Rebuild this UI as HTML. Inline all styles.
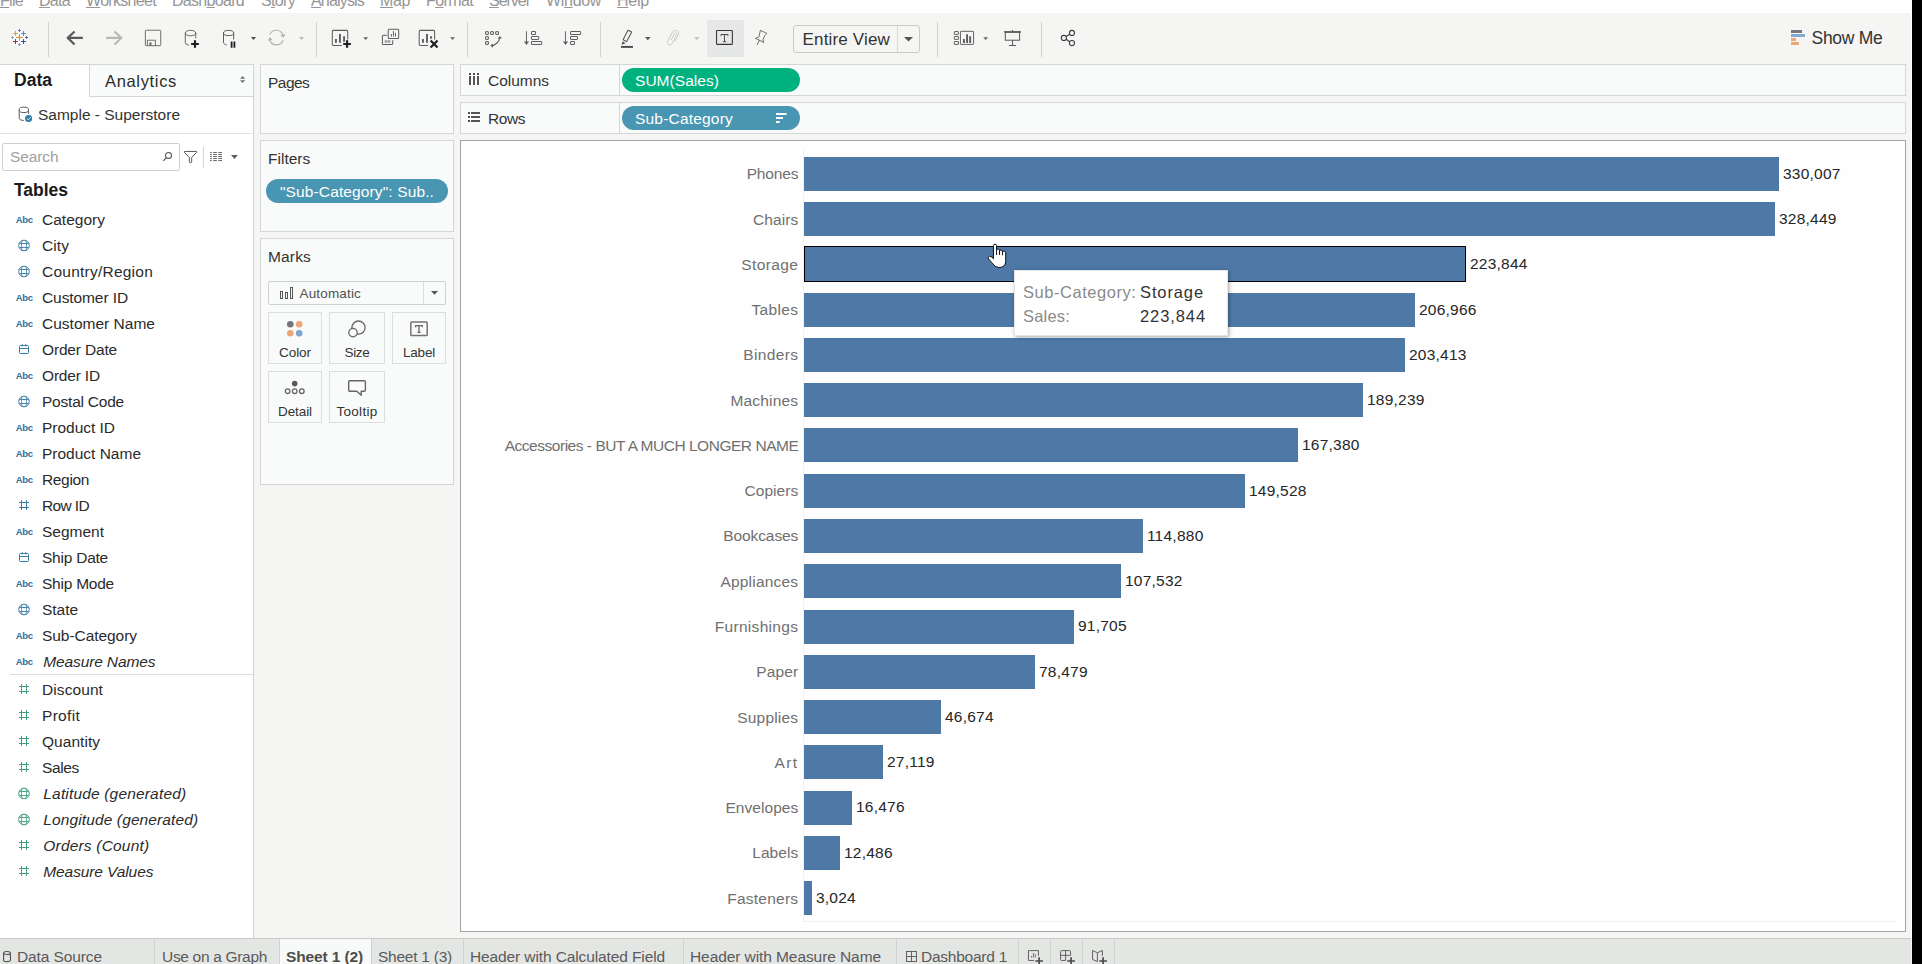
<!DOCTYPE html>
<html><head><meta charset="utf-8"><title>Tableau</title>
<style>
html,body{margin:0;padding:0;}
body{width:1922px;height:964px;position:relative;overflow:hidden;background:#fff;font-family:"Liberation Sans",sans-serif;}
.a{position:absolute;}
.t{white-space:pre;}
svg{overflow:visible;}
</style></head><body>
<div class="a" style="left:0px;top:13px;width:1911px;height:925px;background:#f5f5f3;"></div>
<div class="a" style="left:1912px;top:0px;width:10px;height:964px;background:#000;"></div>
<div class="a" style="left:0;top:0;width:1911px;height:13px;overflow:hidden;background:#fff;">
<span class="a t" style="left:0.00px;top:-7.00px;font-size:16px;line-height:16px;color:#969696;letter-spacing:-0.695px;"><u>F</u>ile</span>
<span class="a t" style="left:39.00px;top:-7.00px;font-size:16px;line-height:16px;color:#969696;letter-spacing:-0.699px;"><u>D</u>ata</span>
<span class="a t" style="left:86.00px;top:-7.00px;font-size:16px;line-height:16px;color:#969696;letter-spacing:-0.687px;"><u>W</u>orksheet</span>
<span class="a t" style="left:172.00px;top:-7.00px;font-size:16px;line-height:16px;color:#969696;letter-spacing:-0.697px;">Dash<u>b</u>oard</span>
<span class="a t" style="left:261.00px;top:-7.00px;font-size:16px;line-height:16px;color:#969696;letter-spacing:-0.669px;">S<u>t</u>ory</span>
<span class="a t" style="left:311.00px;top:-7.00px;font-size:16px;line-height:16px;color:#969696;letter-spacing:-0.822px;"><u>A</u>nalysis</span>
<span class="a t" style="left:380.00px;top:-7.00px;font-size:16px;line-height:16px;color:#969696;letter-spacing:-0.375px;"><u>M</u>ap</span>
<span class="a t" style="left:426.00px;top:-7.00px;font-size:16px;line-height:16px;color:#969696;letter-spacing:-0.612px;">F<u>o</u>rmat</span>
<span class="a t" style="left:489.00px;top:-7.00px;font-size:16px;line-height:16px;color:#969696;letter-spacing:-1.021px;"><u>S</u>erver</span>
<span class="a t" style="left:546.00px;top:-7.00px;font-size:16px;line-height:16px;color:#969696;letter-spacing:-0.318px;">Wi<u>n</u>dow</span>
<span class="a t" style="left:617.00px;top:-7.00px;font-size:16px;line-height:16px;color:#969696;letter-spacing:-0.227px;"><u>H</u>elp</span>
</div>
<div class="a" style="left:48px;top:22px;width:1px;height:35px;background:#d2d2d0;"></div>
<div class="a" style="left:316px;top:22px;width:1px;height:35px;background:#d2d2d0;"></div>
<div class="a" style="left:467px;top:22px;width:1px;height:35px;background:#d2d2d0;"></div>
<div class="a" style="left:600px;top:22px;width:1px;height:35px;background:#d2d2d0;"></div>
<div class="a" style="left:937px;top:22px;width:1px;height:35px;background:#d2d2d0;"></div>
<div class="a" style="left:1041px;top:22px;width:1px;height:35px;background:#d2d2d0;"></div>
<svg class="a" style="left:4px;top:22px;" width="50" height="32" viewBox="0 0 1506 964"><path d="M465 185L745 465L465 745L185 465Z" fill="#fbfbfa"/><path d="M362 465H568M465 362V568" stroke="#de8a2a" stroke-width="30" fill="none"/><path d="M271 345H419M345 271V419" stroke="#e2932a" stroke-width="28" fill="none"/><path d="M514 345H660M587 272V418" stroke="#4f7db3" stroke-width="28" fill="none"/><path d="M271 588H419M345 514V662" stroke="#8c2040" stroke-width="28" fill="none"/><path d="M514 588H660M587 515V661" stroke="#24408e" stroke-width="28" fill="none"/><path d="M421 255H509M465 211V299" stroke="#6c76b4" stroke-width="30" fill="none"/><path d="M211 465H299M255 421V509" stroke="#8ba0b8" stroke-width="30" fill="none"/><path d="M636 465H724M680 421V509" stroke="#525fa0" stroke-width="30" fill="none"/><path d="M421 680H509M465 636V724" stroke="#7f93c8" stroke-width="30" fill="none"/></svg>
<svg class="a" style="left:60px;top:22px;" width="140" height="32" viewBox="0 0 1922 439.3"><path d="M314 218H108M200 130L106 218L200 308" fill="none" stroke="#5a5a5a" stroke-width="30" stroke-linejoin="round"/><path d="M633 218H842M748 130L844 218L748 308" fill="none" stroke="#b7b7b5" stroke-width="28" stroke-linejoin="round"/><rect x="1172" y="113" width="211" height="212" rx="12" fill="none" stroke="#666" stroke-width="13"/><path d="M1200 325V250H1310V325" fill="none" stroke="#666" stroke-width="13"/><rect x="1228" y="280" width="28" height="42" fill="#666"/><ellipse cx="1792" cy="152" rx="72" ry="38" fill="none" stroke="#5c5c5c" stroke-width="13"/><path d="M1720 152V285Q1722 312 1768 318M1864 152V225" fill="none" stroke="#5c5c5c" stroke-width="13"/><path d="M1800 302H1906M1853 250V355" stroke="#231f20" stroke-width="30"/></svg>
<svg class="a" style="left:223px;top:30px;" width="18" height="20" viewBox="0 0 18 20"><ellipse cx="5.6" cy="3" rx="5.1" ry="2.6" fill="none" stroke="#5c5c5c" stroke-width="1"/><path d="M0.5 3V12.5C0.5 13.8 2 14.6 3.8 14.9M10.7 3V9.5" fill="none" stroke="#5c5c5c" stroke-width="1"/><path d="M8.6 11.6V17.8M11.4 11.6V17.8" stroke="#231f20" stroke-width="1.8" fill="none"/></svg>
<svg class="a" style="left:240px;top:22px;" width="80" height="32" viewBox="0 0 1922 768.8"><path d="M263 362H385L324 432Z" fill="#4d4d4d"/><path d="M716 303A168 168 0 0 1 1032 318M1036 438A168 168 0 0 1 718 432" fill="none" stroke="#b3b3b1" stroke-width="27"/><path d="M1087 288L968 320L1050 378ZM706 368L673 452L787 425Z" fill="#b3b3b1"/><path d="M1418 362H1538L1478 432Z" fill="#bababa"/></svg>
<svg class="a" style="left:325px;top:22px;" width="140" height="32" viewBox="0 0 1922 439.3"><path d="M232 322H115Q100 322 100 307V130Q100 115 115 115H297Q312 115 312 130V240" fill="none" stroke="#5c5c5c" stroke-width="14"/><path d="M150 235V285M205 165V285M262 195V272" stroke="#5c5c5c" stroke-width="26"/><path d="M250 302H356M303 250V355" stroke="#231f20" stroke-width="30"/><path d="M525 208H592L558 248Z" fill="#666"/><path d="M850 183H803Q788 183 788 198V295Q788 310 803 310H915Q930 310 930 295V250" fill="none" stroke="#5c5c5c" stroke-width="14"/><path d="M828 250V285M849 250V285M870 250V285M891 250V285" stroke="#5c5c5c" stroke-width="10"/><rect x="868" y="100" width="144" height="128" rx="15" fill="none" stroke="#5c5c5c" stroke-width="14"/><path d="M912 165V200M940 125V200M968 150V200" stroke="#5c5c5c" stroke-width="13"/><path d="M1415 322H1308Q1293 322 1293 307V130Q1293 115 1308 115H1490Q1505 115 1505 130V240" fill="none" stroke="#5c5c5c" stroke-width="14"/><path d="M1345 235V285M1400 165V285M1455 195V230" stroke="#5c5c5c" stroke-width="26"/><path d="M1450 255L1545 350M1545 255L1450 350" stroke="#231f20" stroke-width="30"/><path d="M1718 208H1785L1751 248Z" fill="#666"/></svg>
<svg class="a" style="left:475px;top:22px;" width="120" height="32" viewBox="0 0 1922 512.5"><rect x="170" y="155" width="44" height="44" rx="2" fill="none" stroke="#5c5c5c" stroke-width="16"/><rect x="251" y="155" width="44" height="44" rx="2" fill="none" stroke="#5c5c5c" stroke-width="16"/><rect x="332" y="155" width="44" height="44" rx="2" fill="none" stroke="#5c5c5c" stroke-width="16"/><rect x="170" y="235" width="44" height="44" rx="2" fill="none" stroke="#5c5c5c" stroke-width="16"/><rect x="170" y="315" width="44" height="44" rx="2" fill="none" stroke="#5c5c5c" stroke-width="16"/><path d="M392 268Q375 345 288 378" fill="none" stroke="#5c5c5c" stroke-width="18"/><path d="M362 268L396 224L432 265ZM288 348L243 378L288 412Z" fill="#5c5c5c"/><path d="M824 148V330" stroke="#5c5c5c" stroke-width="15"/><path d="M784 312H866L825 370Z" fill="#5c5c5c"/><rect x="905" y="152" width="65" height="48" rx="5" fill="none" stroke="#5c5c5c" stroke-width="16"/><rect x="905" y="232" width="115" height="48" rx="5" fill="none" stroke="#5c5c5c" stroke-width="16"/><rect x="905" y="312" width="163" height="48" rx="5" fill="none" stroke="#5c5c5c" stroke-width="16"/><path d="M1449 148V330" stroke="#5c5c5c" stroke-width="15"/><path d="M1409 312H1491L1450 370Z" fill="#5c5c5c"/><rect x="1530" y="152" width="162" height="48" rx="5" fill="none" stroke="#5c5c5c" stroke-width="16"/><rect x="1530" y="232" width="110" height="48" rx="5" fill="none" stroke="#5c5c5c" stroke-width="16"/><rect x="1530" y="312" width="63" height="48" rx="5" fill="none" stroke="#5c5c5c" stroke-width="16"/></svg>
<svg class="a" style="left:610px;top:22px;" width="100" height="32" viewBox="0 0 1922 615.0"><path d="M345 158L418 192L318 378L252 340Z" fill="none" stroke="#555" stroke-width="20" stroke-linejoin="round"/><path d="M238 372L300 408L226 436Z" fill="#555"/><rect x="212" y="460" width="230" height="37" fill="#4a4a4a"/></svg>
<svg class="a" style="left:645.2px;top:36.85px;" width="5.6" height="3.3" viewBox="0 0 5.6 3.3"><path d="M0 0H5.6L2.8 3.3Z" fill="#555"/></svg>
<svg class="a" style="left:610px;top:22px;" width="100" height="32" viewBox="0 0 1922 615.0"><path d="M1250 375L1315 240C1345 170 1240 130 1200 195L1105 385C1085 435 1165 460 1192 415L1282 245C1292 212 1248 200 1234 232L1180 335" fill="none" stroke="#c3c3c1" stroke-width="17" stroke-linecap="round"/></svg>
<svg class="a" style="left:694.2px;top:36.85px;" width="5.6" height="3.3" viewBox="0 0 5.6 3.3"><path d="M0 0H5.6L2.8 3.3Z" fill="#c4c4c2"/></svg>
<div class="a" style="left:707px;top:20px;width:37px;height:37px;background:#e6e8e7;"></div>
<svg class="a" style="left:700px;top:22px;" width="100" height="32" viewBox="0 0 1922 615.0"><rect x="318" y="162" width="304" height="268" rx="14" fill="none" stroke="#3a3636" stroke-width="21"/><path d="M405 270V240H537V270M471 240V378M440 378H502" fill="none" stroke="#3a3636" stroke-width="17"/></svg>
<svg class="a" style="left:700px;top:22px;" width="100" height="32" viewBox="0 0 1922 615.0"><path d="M1160 160L1285 218L1245 258L1212 340L1225 395L1145 350L1065 315L1135 285Z" fill="none" stroke="#555" stroke-width="16" stroke-linejoin="miter"/><path d="M1142 352L1100 435" stroke="#555" stroke-width="17" stroke-linecap="round"/></svg>
<div class="a" style="left:793px;top:25px;width:127px;height:28px;background:#f5f5f3;border:1px solid #c9c9c7;box-sizing:border-box;border-radius:3px;"></div>
<div class="a" style="left:897px;top:26px;width:1px;height:26px;background:#d8d8d6;"></div>
<span class="a t" style="left:802.50px;top:31.00px;font-size:17px;line-height:17px;color:#333;letter-spacing:0.166px;">Entire View</span>
<svg class="a" style="left:903.5px;top:36.75px;" width="9" height="4.5" viewBox="0 0 9 4.5"><path d="M0 0H9L4.5 4.5Z" fill="#555"/></svg>
<svg class="a" style="left:945px;top:22px;" width="140" height="32" viewBox="0 0 1922 439.3"><rect x="128" y="131" width="56" height="40" rx="4" fill="none" stroke="#5c5c5c" stroke-width="13"/><rect x="128" y="199" width="56" height="40" rx="4" fill="none" stroke="#5c5c5c" stroke-width="13"/><rect x="128" y="268" width="56" height="40" rx="4" fill="none" stroke="#5c5c5c" stroke-width="13"/><rect x="212" y="128" width="180" height="180" rx="8" fill="none" stroke="#5c5c5c" stroke-width="13"/><path d="M260 235V287M303 168V287M345 195V287" stroke="#5c5c5c" stroke-width="26"/><path d="M525 208H592L558 248Z" fill="#666"/><path d="M812 136H1042" stroke="#5a5a5a" stroke-width="22"/><path d="M927 110V136M927 250V322M878 322H976" stroke="#5a5a5a" stroke-width="14"/><rect x="828" y="140" width="196" height="110" fill="none" stroke="#5a5a5a" stroke-width="14"/><circle cx="1743" cy="150" r="35" fill="none" stroke="#423d43" stroke-width="15"/><circle cx="1632" cy="218" r="35" fill="none" stroke="#423d43" stroke-width="15"/><circle cx="1743" cy="290" r="35" fill="none" stroke="#423d43" stroke-width="15"/><path d="M1663 200L1712 168M1663 237L1712 272" stroke="#423d43" stroke-width="15"/></svg>
<svg class="a" style="left:1791px;top:30px;" width="15" height="16" viewBox="0 0 15 16"><rect x="-0.5" y="-0.5" width="12" height="4" fill="#fbfbfa"/><rect x="-0.5" y="3.5" width="15" height="4" fill="#fbfbfa"/><rect x="-0.5" y="7.5" width="6" height="4" fill="#fbfbfa"/><rect x="-0.5" y="11.5" width="9" height="4" fill="#fbfbfa"/><rect x="0" y="0" width="11" height="3" fill="#7d7680"/><rect x="0" y="4" width="14" height="3" fill="#82a9cf"/><rect x="0" y="8" width="5" height="3" fill="#eba577"/><rect x="0" y="12" width="8" height="3" fill="#eba577"/></svg>
<span class="a t" style="left:1811.50px;top:30.00px;font-size:17.5px;line-height:17.5px;color:#333;letter-spacing:-0.278px;">Show Me</span>
<div class="a" style="left:0px;top:64px;width:254px;height:875px;background:#ffffff;"></div>
<div class="a" style="left:253px;top:64px;width:1px;height:875px;background:#d0d2d1;"></div>
<div class="a" style="left:0px;top:64px;width:254px;height:1px;background:#d4d6d5;"></div>
<div class="a" style="left:89px;top:64px;width:165px;height:33px;background:#f9fbfa;border:1px solid #d4d6d5;box-sizing:border-box;"></div>
<span class="a t" style="left:14.00px;top:72.00px;font-size:17.5px;line-height:17.5px;color:#1a1a1a;font-weight:bold;letter-spacing:0.017px;">Data</span>
<span class="a t" style="left:105.00px;top:73.00px;font-size:16.5px;line-height:16.5px;color:#2a2a2a;letter-spacing:0.664px;">Analytics</span>
<svg class="a" style="left:239.9px;top:76px;" width="6" height="8" viewBox="0 0 6 8"><path d="M0 2.8L2.6 0L5.2 2.8ZM0 4.2L2.6 7L5.2 4.2Z" fill="#5f7a70"/></svg>
<svg class="a" style="left:10px;top:100px;" width="60" height="30" viewBox="0 0 1922 961.0"><ellipse cx="445" cy="315" rx="150" ry="88" fill="none" stroke="#585858" stroke-width="32"/><path d="M295 315V585Q300 650 440 660M595 315V440" fill="none" stroke="#585858" stroke-width="32"/><circle cx="595" cy="592" r="114" fill="#2e7da4"/><path d="M538 590L585 634L662 556" fill="none" stroke="#fff" stroke-width="27"/></svg>
<span class="a t" style="left:38.00px;top:107.00px;font-size:15.5px;line-height:15.5px;color:#333;letter-spacing:-0.008px;">Sample - Superstore</span>
<div class="a" style="left:0px;top:133px;width:253px;height:1px;background:#e2e2e2;"></div>
<div class="a" style="left:2px;top:143px;width:178px;height:28px;background:#fff;border:1px solid #cfcfcf;box-sizing:border-box;border-radius:2px;"></div>
<span class="a t" style="left:10.00px;top:149.00px;font-size:15.5px;line-height:15.5px;color:#a0a0a0;letter-spacing:-0.102px;">Search</span>
<svg class="a" style="left:155px;top:140px;" width="100" height="34" viewBox="0 0 1922 653.5"><circle cx="260" cy="298" r="58" fill="none" stroke="#555" stroke-width="20"/><path d="M217 343L158 400" stroke="#555" stroke-width="23"/><path d="M565 220H800V238L705 335V425Q705 435 682 435Q660 435 660 425V335L565 238Z" fill="none" stroke="#555" stroke-width="19" stroke-linejoin="round"/><path d="M930 120V535" stroke="#cfcfcf" stroke-width="18"/><path d="M1058 240H1092M1118 240H1190M1215 240H1288" stroke="#5c5c5c" stroke-width="18"/><path d="M1058 278H1092M1118 278H1190M1215 278H1288" stroke="#5c5c5c" stroke-width="18"/><path d="M1058 317H1092M1118 317H1190M1215 317H1288" stroke="#5c5c5c" stroke-width="18"/><path d="M1058 356H1092M1118 356H1190M1215 356H1288" stroke="#5c5c5c" stroke-width="18"/><path d="M1058 395H1092M1118 395H1190M1215 395H1288" stroke="#5c5c5c" stroke-width="18"/><path d="M1462 290H1592L1527 365Z" fill="#5c5c5c"/></svg>
<span class="a t" style="left:14.00px;top:182.00px;font-size:17.5px;line-height:17.5px;color:#1a1a1a;font-weight:bold;letter-spacing:-0.023px;">Tables</span>
<span class="a t" style="left:15.80px;top:215.00px;font-size:9.5px;line-height:9.5px;color:#2f6f9b;font-weight:bold;letter-spacing:-0.382px;">Abc</span>
<span class="a t" style="left:42.00px;top:212.00px;font-size:15.5px;line-height:15.5px;color:#2b2b2b;letter-spacing:0.013px;">Category</span>
<svg class="a" style="left:17.5px;top:238.5px;" width="12" height="12" viewBox="0 0 12 12"><circle cx="6" cy="6.5" r="5.3" fill="none" stroke="#3b7ea6" stroke-width="1"/><path d="M3.8 1.7Q3.2 6.5 3.8 11.3M8.2 1.7Q8.8 6.5 8.2 11.3M1.2 4.5H10.8M1.2 8.5H10.8" stroke="#3b7ea6" stroke-width="0.9" fill="none"/></svg>
<span class="a t" style="left:42.00px;top:238.00px;font-size:15.5px;line-height:15.5px;color:#2b2b2b;letter-spacing:0.077px;">City</span>
<svg class="a" style="left:17.5px;top:264.5px;" width="12" height="12" viewBox="0 0 12 12"><circle cx="6" cy="6.5" r="5.3" fill="none" stroke="#3b7ea6" stroke-width="1"/><path d="M3.8 1.7Q3.2 6.5 3.8 11.3M8.2 1.7Q8.8 6.5 8.2 11.3M1.2 4.5H10.8M1.2 8.5H10.8" stroke="#3b7ea6" stroke-width="0.9" fill="none"/></svg>
<span class="a t" style="left:42.00px;top:264.00px;font-size:15.5px;line-height:15.5px;color:#2b2b2b;letter-spacing:0.236px;">Country/Region</span>
<span class="a t" style="left:15.80px;top:293.00px;font-size:9.5px;line-height:9.5px;color:#2f6f9b;font-weight:bold;letter-spacing:-0.382px;">Abc</span>
<span class="a t" style="left:42.00px;top:290.00px;font-size:15.5px;line-height:15.5px;color:#2b2b2b;letter-spacing:-0.090px;">Customer ID</span>
<span class="a t" style="left:15.80px;top:319.00px;font-size:9.5px;line-height:9.5px;color:#2f6f9b;font-weight:bold;letter-spacing:-0.382px;">Abc</span>
<span class="a t" style="left:42.00px;top:316.00px;font-size:15.5px;line-height:15.5px;color:#2b2b2b;letter-spacing:0.013px;">Customer Name</span>
<svg class="a" style="left:19px;top:344px;" width="11" height="11" viewBox="0 0 11 11"><rect x="0.5" y="1.5" width="9" height="8" rx="0.8" fill="none" stroke="#3b7ea6" stroke-width="1"/><path d="M0.5 4.5H9.5M3.2 0V2.5M6.8 0V2.5" stroke="#3b7ea6" stroke-width="1" fill="none"/></svg>
<span class="a t" style="left:42.00px;top:342.00px;font-size:15.5px;line-height:15.5px;color:#2b2b2b;letter-spacing:-0.167px;">Order Date</span>
<span class="a t" style="left:15.80px;top:371.00px;font-size:9.5px;line-height:9.5px;color:#2f6f9b;font-weight:bold;letter-spacing:-0.382px;">Abc</span>
<span class="a t" style="left:42.00px;top:368.00px;font-size:15.5px;line-height:15.5px;color:#2b2b2b;letter-spacing:-0.178px;">Order ID</span>
<svg class="a" style="left:17.5px;top:394.5px;" width="12" height="12" viewBox="0 0 12 12"><circle cx="6" cy="6.5" r="5.3" fill="none" stroke="#3b7ea6" stroke-width="1"/><path d="M3.8 1.7Q3.2 6.5 3.8 11.3M8.2 1.7Q8.8 6.5 8.2 11.3M1.2 4.5H10.8M1.2 8.5H10.8" stroke="#3b7ea6" stroke-width="0.9" fill="none"/></svg>
<span class="a t" style="left:42.00px;top:394.00px;font-size:15.5px;line-height:15.5px;color:#2b2b2b;letter-spacing:-0.222px;">Postal Code</span>
<span class="a t" style="left:15.80px;top:423.00px;font-size:9.5px;line-height:9.5px;color:#2f6f9b;font-weight:bold;letter-spacing:-0.382px;">Abc</span>
<span class="a t" style="left:42.00px;top:420.00px;font-size:15.5px;line-height:15.5px;color:#2b2b2b;letter-spacing:-0.022px;">Product ID</span>
<span class="a t" style="left:15.80px;top:449.00px;font-size:9.5px;line-height:9.5px;color:#2f6f9b;font-weight:bold;letter-spacing:-0.382px;">Abc</span>
<span class="a t" style="left:42.00px;top:446.00px;font-size:15.5px;line-height:15.5px;color:#2b2b2b;letter-spacing:-0.006px;">Product Name</span>
<span class="a t" style="left:15.80px;top:475.00px;font-size:9.5px;line-height:9.5px;color:#2f6f9b;font-weight:bold;letter-spacing:-0.382px;">Abc</span>
<span class="a t" style="left:42.00px;top:472.00px;font-size:15.5px;line-height:15.5px;color:#2b2b2b;letter-spacing:-0.353px;">Region</span>
<svg class="a" style="left:19px;top:500px;" width="10" height="10" viewBox="0 0 10 10"><path d="M2.5 0V10M7.5 0V10M0 2.5H10M0 7.5H10" stroke="#3b7ea6" stroke-width="1" fill="none"/></svg>
<span class="a t" style="left:42.00px;top:498.00px;font-size:15.5px;line-height:15.5px;color:#2b2b2b;letter-spacing:-0.636px;">Row ID</span>
<span class="a t" style="left:15.80px;top:527.00px;font-size:9.5px;line-height:9.5px;color:#2f6f9b;font-weight:bold;letter-spacing:-0.382px;">Abc</span>
<span class="a t" style="left:42.00px;top:524.00px;font-size:15.5px;line-height:15.5px;color:#2b2b2b;letter-spacing:-0.005px;">Segment</span>
<svg class="a" style="left:19px;top:552px;" width="11" height="11" viewBox="0 0 11 11"><rect x="0.5" y="1.5" width="9" height="8" rx="0.8" fill="none" stroke="#3b7ea6" stroke-width="1"/><path d="M0.5 4.5H9.5M3.2 0V2.5M6.8 0V2.5" stroke="#3b7ea6" stroke-width="1" fill="none"/></svg>
<span class="a t" style="left:42.00px;top:550.00px;font-size:15.5px;line-height:15.5px;color:#2b2b2b;letter-spacing:-0.230px;">Ship Date</span>
<span class="a t" style="left:15.80px;top:579.00px;font-size:9.5px;line-height:9.5px;color:#2f6f9b;font-weight:bold;letter-spacing:-0.382px;">Abc</span>
<span class="a t" style="left:42.00px;top:576.00px;font-size:15.5px;line-height:15.5px;color:#2b2b2b;letter-spacing:-0.234px;">Ship Mode</span>
<svg class="a" style="left:17.5px;top:602.5px;" width="12" height="12" viewBox="0 0 12 12"><circle cx="6" cy="6.5" r="5.3" fill="none" stroke="#3b7ea6" stroke-width="1"/><path d="M3.8 1.7Q3.2 6.5 3.8 11.3M8.2 1.7Q8.8 6.5 8.2 11.3M1.2 4.5H10.8M1.2 8.5H10.8" stroke="#3b7ea6" stroke-width="0.9" fill="none"/></svg>
<span class="a t" style="left:42.00px;top:602.00px;font-size:15.5px;line-height:15.5px;color:#2b2b2b;letter-spacing:-0.038px;">State</span>
<span class="a t" style="left:15.80px;top:631.00px;font-size:9.5px;line-height:9.5px;color:#2f6f9b;font-weight:bold;letter-spacing:-0.382px;">Abc</span>
<span class="a t" style="left:42.00px;top:628.00px;font-size:15.5px;line-height:15.5px;color:#2b2b2b;letter-spacing:-0.053px;">Sub-Category</span>
<span class="a t" style="left:15.80px;top:657.00px;font-size:9.5px;line-height:9.5px;color:#2f6f9b;font-weight:bold;letter-spacing:-0.382px;">Abc</span>
<span class="a t" style="left:43.30px;top:654.00px;font-size:15.5px;line-height:15.5px;color:#2b2b2b;font-style:italic;letter-spacing:-0.131px;">Measure Names</span>
<div class="a" style="left:10px;top:674px;width:243px;height:1px;background:#dcdcdc;"></div>
<svg class="a" style="left:19px;top:684px;" width="10" height="10" viewBox="0 0 10 10"><path d="M2.5 0V10M7.5 0V10M0 2.5H10M0 7.5H10" stroke="#3f9e7c" stroke-width="1" fill="none"/></svg>
<span class="a t" style="left:42.00px;top:682.00px;font-size:15.5px;line-height:15.5px;color:#2b2b2b;letter-spacing:0.087px;">Discount</span>
<svg class="a" style="left:19px;top:710px;" width="10" height="10" viewBox="0 0 10 10"><path d="M2.5 0V10M7.5 0V10M0 2.5H10M0 7.5H10" stroke="#3f9e7c" stroke-width="1" fill="none"/></svg>
<span class="a t" style="left:42.00px;top:708.00px;font-size:15.5px;line-height:15.5px;color:#2b2b2b;letter-spacing:0.304px;">Profit</span>
<svg class="a" style="left:19px;top:736px;" width="10" height="10" viewBox="0 0 10 10"><path d="M2.5 0V10M7.5 0V10M0 2.5H10M0 7.5H10" stroke="#3f9e7c" stroke-width="1" fill="none"/></svg>
<span class="a t" style="left:42.00px;top:734.00px;font-size:15.5px;line-height:15.5px;color:#2b2b2b;letter-spacing:0.035px;">Quantity</span>
<svg class="a" style="left:19px;top:762px;" width="10" height="10" viewBox="0 0 10 10"><path d="M2.5 0V10M7.5 0V10M0 2.5H10M0 7.5H10" stroke="#3f9e7c" stroke-width="1" fill="none"/></svg>
<span class="a t" style="left:42.00px;top:760.00px;font-size:15.5px;line-height:15.5px;color:#2b2b2b;letter-spacing:-0.355px;">Sales</span>
<svg class="a" style="left:17.5px;top:786.5px;" width="12" height="12" viewBox="0 0 12 12"><circle cx="6" cy="6.5" r="5.3" fill="none" stroke="#3f9e7c" stroke-width="1"/><path d="M3.8 1.7Q3.2 6.5 3.8 11.3M8.2 1.7Q8.8 6.5 8.2 11.3M1.2 4.5H10.8M1.2 8.5H10.8" stroke="#3f9e7c" stroke-width="0.9" fill="none"/></svg>
<span class="a t" style="left:43.30px;top:786.00px;font-size:15.5px;line-height:15.5px;color:#2b2b2b;font-style:italic;letter-spacing:0.170px;">Latitude (generated)</span>
<svg class="a" style="left:17.5px;top:812.5px;" width="12" height="12" viewBox="0 0 12 12"><circle cx="6" cy="6.5" r="5.3" fill="none" stroke="#3f9e7c" stroke-width="1"/><path d="M3.8 1.7Q3.2 6.5 3.8 11.3M8.2 1.7Q8.8 6.5 8.2 11.3M1.2 4.5H10.8M1.2 8.5H10.8" stroke="#3f9e7c" stroke-width="0.9" fill="none"/></svg>
<span class="a t" style="left:43.30px;top:812.00px;font-size:15.5px;line-height:15.5px;color:#2b2b2b;font-style:italic;letter-spacing:0.117px;">Longitude (generated)</span>
<svg class="a" style="left:19px;top:840px;" width="10" height="10" viewBox="0 0 10 10"><path d="M2.5 0V10M7.5 0V10M0 2.5H10M0 7.5H10" stroke="#3f9e7c" stroke-width="1" fill="none"/></svg>
<span class="a t" style="left:43.30px;top:838.00px;font-size:15.5px;line-height:15.5px;color:#2b2b2b;font-style:italic;letter-spacing:0.188px;">Orders (Count)</span>
<svg class="a" style="left:19px;top:866px;" width="10" height="10" viewBox="0 0 10 10"><path d="M2.5 0V10M7.5 0V10M0 2.5H10M0 7.5H10" stroke="#3f9e7c" stroke-width="1" fill="none"/></svg>
<span class="a t" style="left:43.30px;top:864.00px;font-size:15.5px;line-height:15.5px;color:#2b2b2b;font-style:italic;letter-spacing:-0.102px;">Measure Values</span>
<div class="a" style="left:260px;top:64px;width:194px;height:70px;background:#f9fbfa;border:1px solid #d4d6d5;box-sizing:border-box;"></div>
<span class="a t" style="left:268.00px;top:75.00px;font-size:15.5px;line-height:15.5px;color:#333;letter-spacing:-0.530px;">Pages</span>
<div class="a" style="left:260px;top:140px;width:194px;height:92px;background:#f9fbfa;border:1px solid #d4d6d5;box-sizing:border-box;"></div>
<span class="a t" style="left:268.00px;top:151.00px;font-size:15.5px;line-height:15.5px;color:#333;letter-spacing:0.015px;">Filters</span>
<div class="a" style="left:266px;top:179px;width:182px;height:24px;background:#4996b2;border-radius:12px;"></div>
<span class="a t" style="left:280.00px;top:184.00px;font-size:15.5px;line-height:15.5px;color:#fff;letter-spacing:0.122px;">&quot;Sub-Category&quot;: Sub..</span>
<div class="a" style="left:260px;top:238px;width:194px;height:247px;background:#f9fbfa;border:1px solid #d4d6d5;box-sizing:border-box;"></div>
<span class="a t" style="left:268.00px;top:249.00px;font-size:15.5px;line-height:15.5px;color:#333;letter-spacing:0.161px;">Marks</span>
<div class="a" style="left:268px;top:281px;width:178px;height:24px;background:#f9fbfa;border:1px solid #cfd1d0;box-sizing:border-box;border-radius:2px;"></div>
<div class="a" style="left:423px;top:282px;width:1px;height:22px;background:#dcdedd;"></div>
<svg class="a" style="left:280px;top:287px;" width="14" height="12" viewBox="0 0 14 12"><rect x="0.5" y="4.5" width="2" height="7" fill="none" stroke="#555" stroke-width="1"/><rect x="5.5" y="5.5" width="2" height="6" fill="none" stroke="#555" stroke-width="1"/><rect x="10.5" y="0.5" width="2" height="11" fill="none" stroke="#555" stroke-width="1"/></svg>
<span class="a t" style="left:299.50px;top:287.00px;font-size:13.5px;line-height:13.5px;color:#505050;letter-spacing:0.164px;">Automatic</span>
<svg class="a" style="left:431.0px;top:291.1px;" width="7" height="3.8" viewBox="0 0 7 3.8"><path d="M0 0H7L3.5 3.8Z" fill="#555"/></svg>
<div class="a" style="left:268px;top:312px;width:54px;height:52px;background:#f9fbfa;border:1px solid #dcdedd;box-sizing:border-box;"></div>
<span class="a t" style="left:279.00px;top:346.00px;font-size:13.5px;line-height:13.5px;color:#333;letter-spacing:-0.052px;">Color</span>
<div class="a" style="left:329px;top:312px;width:56px;height:52px;background:#f9fbfa;border:1px solid #dcdedd;box-sizing:border-box;"></div>
<span class="a t" style="left:344.50px;top:346.00px;font-size:13.5px;line-height:13.5px;color:#333;letter-spacing:-0.315px;">Size</span>
<div class="a" style="left:392px;top:312px;width:54px;height:52px;background:#f9fbfa;border:1px solid #dcdedd;box-sizing:border-box;"></div>
<span class="a t" style="left:403.00px;top:346.00px;font-size:13.5px;line-height:13.5px;color:#333;letter-spacing:-0.206px;">Label</span>
<div class="a" style="left:268px;top:371px;width:54px;height:52px;background:#f9fbfa;border:1px solid #dcdedd;box-sizing:border-box;"></div>
<span class="a t" style="left:278.00px;top:405.00px;font-size:13.5px;line-height:13.5px;color:#333;letter-spacing:-0.086px;">Detail</span>
<div class="a" style="left:329px;top:371px;width:56px;height:52px;background:#f9fbfa;border:1px solid #dcdedd;box-sizing:border-box;"></div>
<span class="a t" style="left:336.50px;top:405.00px;font-size:13.5px;line-height:13.5px;color:#333;letter-spacing:0.282px;">Tooltip</span>
<svg class="a" style="left:286px;top:320px;" width="18" height="18" viewBox="0 0 18 18"><circle cx="4.3" cy="4.3" r="3.3" fill="#76747a"/><circle cx="13.2" cy="4.3" r="3.3" fill="#eda676"/><circle cx="4.3" cy="13.2" r="3.3" fill="#eda676"/><circle cx="13.2" cy="13.2" r="3.3" fill="#7ba6cf"/></svg>
<svg class="a" style="left:347px;top:320px;" width="20" height="18" viewBox="0 0 20 18"><circle cx="11.5" cy="7.6" r="6.6" fill="none" stroke="#666" stroke-width="1.3"/><circle cx="6" cy="12.6" r="4.2" fill="#f9fbfa" stroke="#666" stroke-width="1.3"/></svg>
<svg class="a" style="left:410px;top:321px;" width="18" height="16" viewBox="0 0 18 16"><rect x="0.8" y="1" width="16.4" height="13.6" rx="0.8" fill="none" stroke="#777177" stroke-width="1.5"/><path d="M5.7 6.2V4.6H12.3V6.2M9 4.6V11.2M7.4 11.4H10.6" stroke="#666" stroke-width="1.3" fill="none"/></svg>
<svg class="a" style="left:284px;top:380px;" width="22" height="14" viewBox="0 0 22 14"><circle cx="10.7" cy="3.6" r="2.8" fill="#5a5a5a"/><circle cx="3.6" cy="11.2" r="2.3" fill="none" stroke="#666" stroke-width="1.3"/><circle cx="10.7" cy="11.2" r="2.3" fill="none" stroke="#666" stroke-width="1.3"/><circle cx="17.8" cy="11.2" r="2.3" fill="none" stroke="#666" stroke-width="1.3"/></svg>
<svg class="a" style="left:348px;top:380px;" width="20" height="18" viewBox="0 0 20 18"><path d="M1.8 0.7H16.2Q17.4 0.7 17.4 1.9V10.1Q17.4 11.3 16.2 11.3H13.2V15.2L8.8 11.3H1.8Q0.7 11.3 0.7 10.1V1.9Q0.7 0.7 1.8 0.7Z" fill="none" stroke="#666" stroke-width="1.4" stroke-linejoin="round"/></svg>
<div class="a" style="left:460px;top:64px;width:1446px;height:32px;background:#f9fbfa;border:1px solid #d4d6d5;box-sizing:border-box;"></div>
<div class="a" style="left:460px;top:102px;width:1446px;height:32px;background:#f9fbfa;border:1px solid #d4d6d5;box-sizing:border-box;"></div>
<div class="a" style="left:619px;top:65px;width:1px;height:30px;background:#d4d6d5;"></div>
<div class="a" style="left:619px;top:103px;width:1px;height:30px;background:#d4d6d5;"></div>
<svg class="a" style="left:468px;top:72px;" width="14" height="14" viewBox="0 0 14 14"><rect x="0.5" y="0.5" width="3" height="13" fill="#fdfefe"/><rect x="1" y="1" width="2" height="2" fill="#505050"/><rect x="1" y="4" width="2" height="9" fill="#555"/><rect x="4.5" y="0.5" width="3" height="13" fill="#fdfefe"/><rect x="5" y="1" width="2" height="2" fill="#505050"/><rect x="5" y="4" width="2" height="9" fill="#555"/><rect x="8.5" y="0.5" width="3" height="13" fill="#fdfefe"/><rect x="9" y="1" width="2" height="2" fill="#505050"/><rect x="9" y="4" width="2" height="9" fill="#555"/></svg>
<span class="a t" style="left:488.00px;top:73.00px;font-size:15.5px;line-height:15.5px;color:#333;letter-spacing:-0.023px;">Columns</span>
<svg class="a" style="left:468px;top:111px;" width="14" height="12" viewBox="0 0 14 12"><rect x="-0.5" y="0.5" width="13" height="3" fill="#fdfefe"/><rect x="0" y="1" width="2" height="2" fill="#505050"/><rect x="3" y="1" width="9" height="2" fill="#555"/><rect x="-0.5" y="4.5" width="13" height="3" fill="#fdfefe"/><rect x="0" y="5" width="2" height="2" fill="#505050"/><rect x="3" y="5" width="9" height="2" fill="#555"/><rect x="-0.5" y="8.5" width="13" height="3" fill="#fdfefe"/><rect x="0" y="9" width="2" height="2" fill="#505050"/><rect x="3" y="9" width="9" height="2" fill="#555"/></svg>
<span class="a t" style="left:488.00px;top:111.00px;font-size:15.5px;line-height:15.5px;color:#333;letter-spacing:-0.439px;">Rows</span>
<div class="a" style="left:622px;top:68px;width:178px;height:24px;background:#00b180;border-radius:12px;"></div>
<span class="a t" style="left:635.00px;top:73.00px;font-size:15.5px;line-height:15.5px;color:#fff;letter-spacing:0.046px;">SUM(Sales)</span>
<div class="a" style="left:622px;top:106px;width:178px;height:24px;background:#4996b2;border-radius:12px;"></div>
<span class="a t" style="left:635.00px;top:111.00px;font-size:15.5px;line-height:15.5px;color:#fff;letter-spacing:0.197px;">Sub-Category</span>
<svg class="a" style="left:775.5px;top:113px;" width="12" height="10" viewBox="0 0 12 10"><path d="M0 1H10.5M0 5H7M0 9H3.7" stroke="#fff" stroke-width="2"/></svg>
<div class="a" style="left:460px;top:140px;width:1446px;height:792px;background:#fefefe;border:1px solid #a3a3a3;box-sizing:border-box;"></div>
<div class="a" style="left:803px;top:150px;width:1px;height:772px;background:#f1f1f1;"></div>
<div class="a" style="left:803px;top:921px;width:1093px;height:1px;background:#f1f1f1;"></div>
<div class="a" style="left:804px;top:157px;width:975px;height:34px;background:#4e79a7;"></div>
<span class="a t" style="left:746.70px;top:166.00px;font-size:15.5px;line-height:15.5px;color:#707070;letter-spacing:-0.162px;">Phones</span>
<span class="a t" style="left:1782.90px;top:166.00px;font-size:15.5px;line-height:15.5px;color:#262626;letter-spacing:0.258px;">330,007</span>
<div class="a" style="left:804px;top:202px;width:971px;height:34px;background:#4e79a7;"></div>
<span class="a t" style="left:753.00px;top:212.00px;font-size:15.5px;line-height:15.5px;color:#707070;letter-spacing:0.085px;">Chairs</span>
<span class="a t" style="left:1778.90px;top:211.00px;font-size:15.5px;line-height:15.5px;color:#262626;letter-spacing:0.258px;">328,449</span>
<div class="a" style="left:804px;top:246px;width:662px;height:36px;background:#4e79a7;border:1px solid #000;box-sizing:border-box;"></div>
<span class="a t" style="left:741.20px;top:257.00px;font-size:15.5px;line-height:15.5px;color:#707070;letter-spacing:0.402px;">Storage</span>
<span class="a t" style="left:1469.90px;top:256.00px;font-size:15.5px;line-height:15.5px;color:#262626;letter-spacing:0.258px;">223,844</span>
<div class="a" style="left:804px;top:293px;width:611px;height:34px;background:#4e79a7;"></div>
<span class="a t" style="left:751.50px;top:302.00px;font-size:15.5px;line-height:15.5px;color:#707070;letter-spacing:0.333px;">Tables</span>
<span class="a t" style="left:1418.90px;top:302.00px;font-size:15.5px;line-height:15.5px;color:#262626;letter-spacing:0.258px;">206,966</span>
<div class="a" style="left:804px;top:338px;width:601px;height:34px;background:#4e79a7;"></div>
<span class="a t" style="left:743.20px;top:347.00px;font-size:15.5px;line-height:15.5px;color:#707070;letter-spacing:0.364px;">Binders</span>
<span class="a t" style="left:1408.90px;top:347.00px;font-size:15.5px;line-height:15.5px;color:#262626;letter-spacing:0.258px;">203,413</span>
<div class="a" style="left:804px;top:383px;width:559px;height:34px;background:#4e79a7;"></div>
<span class="a t" style="left:730.40px;top:393.00px;font-size:15.5px;line-height:15.5px;color:#707070;letter-spacing:0.195px;">Machines</span>
<span class="a t" style="left:1366.90px;top:392.00px;font-size:15.5px;line-height:15.5px;color:#262626;letter-spacing:0.258px;">189,239</span>
<div class="a" style="left:804px;top:428px;width:494px;height:34px;background:#4e79a7;"></div>
<span class="a t" style="left:504.70px;top:438.00px;font-size:15.5px;line-height:15.5px;color:#707070;letter-spacing:-0.473px;">Accessories - BUT A MUCH LONGER NAME</span>
<span class="a t" style="left:1301.90px;top:437.00px;font-size:15.5px;line-height:15.5px;color:#262626;letter-spacing:0.258px;">167,380</span>
<div class="a" style="left:804px;top:474px;width:441px;height:34px;background:#4e79a7;"></div>
<span class="a t" style="left:744.50px;top:483.00px;font-size:15.5px;line-height:15.5px;color:#707070;letter-spacing:0.056px;">Copiers</span>
<span class="a t" style="left:1248.90px;top:483.00px;font-size:15.5px;line-height:15.5px;color:#262626;letter-spacing:0.258px;">149,528</span>
<div class="a" style="left:804px;top:519px;width:339px;height:34px;background:#4e79a7;"></div>
<span class="a t" style="left:723.20px;top:528.00px;font-size:15.5px;line-height:15.5px;color:#707070;letter-spacing:-0.080px;">Bookcases</span>
<span class="a t" style="left:1146.90px;top:528.00px;font-size:15.5px;line-height:15.5px;color:#262626;letter-spacing:0.253px;">114,880</span>
<div class="a" style="left:804px;top:564px;width:317px;height:34px;background:#4e79a7;"></div>
<span class="a t" style="left:720.40px;top:574.00px;font-size:15.5px;line-height:15.5px;color:#707070;letter-spacing:0.207px;">Appliances</span>
<span class="a t" style="left:1124.90px;top:573.00px;font-size:15.5px;line-height:15.5px;color:#262626;letter-spacing:0.258px;">107,532</span>
<div class="a" style="left:804px;top:610px;width:270px;height:34px;background:#4e79a7;"></div>
<span class="a t" style="left:714.70px;top:619.00px;font-size:15.5px;line-height:15.5px;color:#707070;letter-spacing:0.316px;">Furnishings</span>
<span class="a t" style="left:1077.90px;top:618.00px;font-size:15.5px;line-height:15.5px;color:#262626;letter-spacing:0.255px;">91,705</span>
<div class="a" style="left:804px;top:655px;width:231px;height:34px;background:#4e79a7;"></div>
<span class="a t" style="left:756.20px;top:664.00px;font-size:15.5px;line-height:15.5px;color:#707070;letter-spacing:0.148px;">Paper</span>
<span class="a t" style="left:1038.90px;top:664.00px;font-size:15.5px;line-height:15.5px;color:#262626;letter-spacing:0.255px;">78,479</span>
<div class="a" style="left:804px;top:700px;width:137px;height:34px;background:#4e79a7;"></div>
<span class="a t" style="left:737.20px;top:710.00px;font-size:15.5px;line-height:15.5px;color:#707070;letter-spacing:0.205px;">Supplies</span>
<span class="a t" style="left:944.90px;top:709.00px;font-size:15.5px;line-height:15.5px;color:#262626;letter-spacing:0.255px;">46,674</span>
<div class="a" style="left:804px;top:745px;width:79px;height:34px;background:#4e79a7;"></div>
<span class="a t" style="left:774.60px;top:755.00px;font-size:15.5px;line-height:15.5px;color:#707070;letter-spacing:1.298px;">Art</span>
<span class="a t" style="left:886.90px;top:754.00px;font-size:15.5px;line-height:15.5px;color:#262626;letter-spacing:0.249px;">27,119</span>
<div class="a" style="left:804px;top:791px;width:48px;height:34px;background:#4e79a7;"></div>
<span class="a t" style="left:725.40px;top:800.00px;font-size:15.5px;line-height:15.5px;color:#707070;letter-spacing:0.057px;">Envelopes</span>
<span class="a t" style="left:855.90px;top:799.00px;font-size:15.5px;line-height:15.5px;color:#262626;letter-spacing:0.255px;">16,476</span>
<div class="a" style="left:804px;top:836px;width:36px;height:34px;background:#4e79a7;"></div>
<span class="a t" style="left:752.20px;top:845.00px;font-size:15.5px;line-height:15.5px;color:#707070;letter-spacing:0.071px;">Labels</span>
<span class="a t" style="left:843.90px;top:845.00px;font-size:15.5px;line-height:15.5px;color:#262626;letter-spacing:0.255px;">12,486</span>
<div class="a" style="left:804px;top:881px;width:8px;height:34px;background:#4e79a7;"></div>
<span class="a t" style="left:727.20px;top:891.00px;font-size:15.5px;line-height:15.5px;color:#707070;letter-spacing:0.242px;">Fasteners</span>
<span class="a t" style="left:815.90px;top:890.00px;font-size:15.5px;line-height:15.5px;color:#262626;letter-spacing:0.250px;">3,024</span>
<div class="a" style="left:1014px;top:270px;width:214px;height:66px;background:#fff;box-shadow:1px 1px 4px rgba(0,0,0,0.35);border:1px solid #e6e6e6;box-sizing:border-box;"></div>
<span class="a t" style="left:1023.00px;top:284.00px;font-size:16.5px;line-height:16.5px;color:#8a8a8a;letter-spacing:0.547px;">Sub-Category:</span>
<span class="a t" style="left:1140.00px;top:284.00px;font-size:16.5px;line-height:16.5px;color:#333;letter-spacing:0.887px;">Storage</span>
<span class="a t" style="left:1023.00px;top:308.00px;font-size:16.5px;line-height:16.5px;color:#8a8a8a;letter-spacing:0.190px;">Sales:</span>
<span class="a t" style="left:1140.00px;top:308.00px;font-size:16.5px;line-height:16.5px;color:#333;letter-spacing:0.908px;">223,844</span>
<svg class="a" style="left:975px;top:235px;" width="50" height="40" viewBox="0 0 1205 964"><path d="M445 570V255Q445 222 482 222Q520 222 520 255V352Q535 338 557 340Q585 342 592 372Q605 362 628 365Q658 368 666 398Q680 388 703 390Q740 394 740 428V640Q735 785 570 785Q480 780 400 660L325 575Q300 530 350 512Q380 505 445 570Z" fill="#fff" stroke="#0a0a14" stroke-width="24" stroke-linejoin="round"/><path d="M520 352V470M591 372V470M665 398V480" stroke="#0a0a14" stroke-width="24" stroke-linecap="round" fill="none"/></svg>
<div class="a" style="left:0px;top:938px;width:1911px;height:26px;background:#e4e6e4;"></div>
<div class="a" style="left:0px;top:938px;width:1911px;height:1px;background:#c9cbca;"></div>
<div class="a" style="left:1911px;top:939px;width:1px;height:25px;background:#f1f3f2;"></div>
<div class="a" style="left:280px;top:939px;width:91px;height:25px;background:#f8faf9;"></div>
<div class="a" style="left:154px;top:939px;width:1px;height:25px;background:#cfd1d0;"></div>
<div class="a" style="left:279px;top:939px;width:1px;height:25px;background:#cfd1d0;"></div>
<div class="a" style="left:371px;top:939px;width:1px;height:25px;background:#cfd1d0;"></div>
<div class="a" style="left:463px;top:939px;width:1px;height:25px;background:#cfd1d0;"></div>
<div class="a" style="left:683px;top:939px;width:1px;height:25px;background:#cfd1d0;"></div>
<div class="a" style="left:896px;top:939px;width:1px;height:25px;background:#cfd1d0;"></div>
<div class="a" style="left:1018px;top:939px;width:1px;height:25px;background:#cfd1d0;"></div>
<div class="a" style="left:1050px;top:939px;width:1px;height:25px;background:#cfd1d0;"></div>
<div class="a" style="left:1082px;top:939px;width:1px;height:25px;background:#cfd1d0;"></div>
<div class="a" style="left:1114px;top:939px;width:1px;height:25px;background:#cfd1d0;"></div>
<svg class="a" style="left:3px;top:951px;" width="8" height="12" viewBox="0 0 8 12"><ellipse cx="4" cy="2" rx="3.4" ry="1.5" fill="none" stroke="#505050" stroke-width="1.1"/><path d="M0.6 2V9.5C0.6 11 7.4 11 7.4 9.5V2" fill="none" stroke="#505050" stroke-width="1.1"/></svg>
<span class="a t" style="left:17.00px;top:949.00px;font-size:15.5px;line-height:15.5px;color:#5a5a5a;letter-spacing:-0.105px;">Data Source</span>
<span class="a t" style="left:162.00px;top:949.00px;font-size:15.5px;line-height:15.5px;color:#5a5a5a;letter-spacing:-0.316px;">Use on a Graph</span>
<span class="a t" style="left:286.00px;top:949.00px;font-size:15.5px;line-height:15.5px;color:#4d4d4d;font-weight:bold;letter-spacing:-0.126px;">Sheet 1 (2)</span>
<span class="a t" style="left:378.00px;top:949.00px;font-size:15.5px;line-height:15.5px;color:#5a5a5a;letter-spacing:-0.244px;">Sheet 1 (3)</span>
<span class="a t" style="left:470.00px;top:949.00px;font-size:15.5px;line-height:15.5px;color:#5a5a5a;letter-spacing:-0.113px;">Header with Calculated Field</span>
<span class="a t" style="left:690.00px;top:949.00px;font-size:15.5px;line-height:15.5px;color:#5a5a5a;letter-spacing:-0.082px;">Header with Measure Name</span>
<svg class="a" style="left:906px;top:951px;" width="11" height="11" viewBox="0 0 11 11"><rect x="0.5" y="0.5" width="10" height="10" fill="none" stroke="#555" stroke-width="0.9"/><path d="M5.5 0.5V10.5M0.5 5.5H10.5" stroke="#555" stroke-width="0.9"/></svg>
<span class="a t" style="left:921.00px;top:949.00px;font-size:15.5px;line-height:15.5px;color:#5a5a5a;letter-spacing:-0.250px;">Dashboard 1</span>
<svg class="a" style="left:1010px;top:936px;" width="120" height="28" viewBox="0 0 1922 448.5"><path d="M385 392H296V234H456V318" fill="none" stroke="#5a5a5a" stroke-width="15" stroke-linejoin="round"/><path d="M345 345V320M375 345V275M405 345V290" stroke="#5a5a5a" stroke-width="13"/><path d="M405 400H528M466 340V448" stroke="#4a4a4a" stroke-width="27"/><path d="M890 392H825Q810 392 810 377V250Q810 234 825 234H955Q970 234 970 250V310H810M890 234V392" fill="none" stroke="#5a5a5a" stroke-width="15"/><path d="M917 400H1040M978 340V448" stroke="#4a4a4a" stroke-width="27"/><path d="M1322 232L1400 268L1480 232V318M1322 232V375L1400 410V268" fill="none" stroke="#5a5a5a" stroke-width="15" stroke-linejoin="round"/><path d="M1430 400H1553M1491 340V448" stroke="#4a4a4a" stroke-width="27"/></svg>
</body></html>
